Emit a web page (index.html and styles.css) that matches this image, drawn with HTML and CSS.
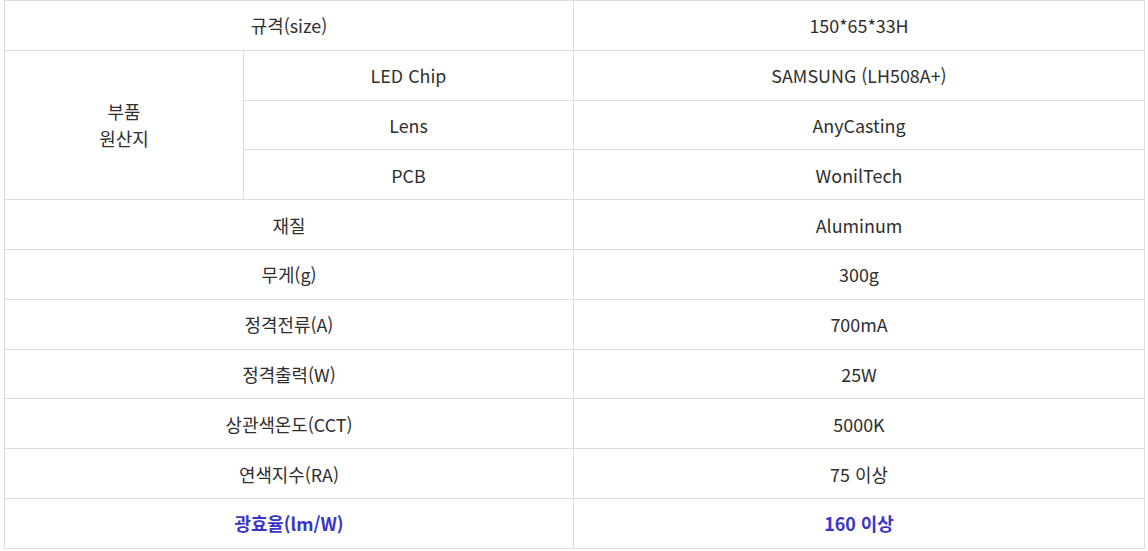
FILE: index.html
```html
<!DOCTYPE html>
<html lang="ko">
<head>
<meta charset="utf-8">
<link rel="stylesheet" href="styles.css">
</head>
<body>
<table class="spec">
  <colgroup>
    <col class="c1"><col class="c2"><col class="c3">
  </colgroup>
  <tr><td colspan="2">규격(size)</td><td>150*65*33H</td></tr>
  <tr><td rowspan="3">부품<br>원산지</td><td>LED Chip</td><td>SAMSUNG (LH508A+)</td></tr>
  <tr><td>Lens</td><td>AnyCasting</td></tr>
  <tr><td>PCB</td><td>WonilTech</td></tr>
  <tr><td colspan="2">재질</td><td>Aluminum</td></tr>
  <tr><td colspan="2">무게(g)</td><td>300g</td></tr>
  <tr><td colspan="2">정격전류(A)</td><td>700mA</td></tr>
  <tr><td colspan="2">정격출력(W)</td><td>25W</td></tr>
  <tr><td colspan="2">상관색온도(CCT)</td><td>5000K</td></tr>
  <tr><td colspan="2">연색지수(RA)</td><td>75 이상</td></tr>
  <tr class="hl"><td colspan="2">광효율(lm/W)</td><td>160 이상</td></tr>
</table>
</body>
</html>
```
FILE: styles.css
```css
html, body {
  margin: 0;
  padding: 0;
  background: #fff;
}
body {
  padding-left: 4px;
}
.spec {
  border-collapse: collapse;
  table-layout: fixed;
  width: 1140px;
  font-family: "Noto Sans CJK KR", "Noto Sans", sans-serif;
  font-size: 17.9px;
  color: #2e2e2e;
}
.c1 { width: 239px; }
.c2 { width: 330px; }
.c3 { width: 571px; }
.spec td {
  border: 1px solid #dddddd;
  text-align: center;
  vertical-align: middle;
  padding: 1px 0 0;
  height: 47.8px;
  line-height: 27px;
}
.spec tr.hl td {
  color: #3a35c8;
  font-weight: 700;
}
```
